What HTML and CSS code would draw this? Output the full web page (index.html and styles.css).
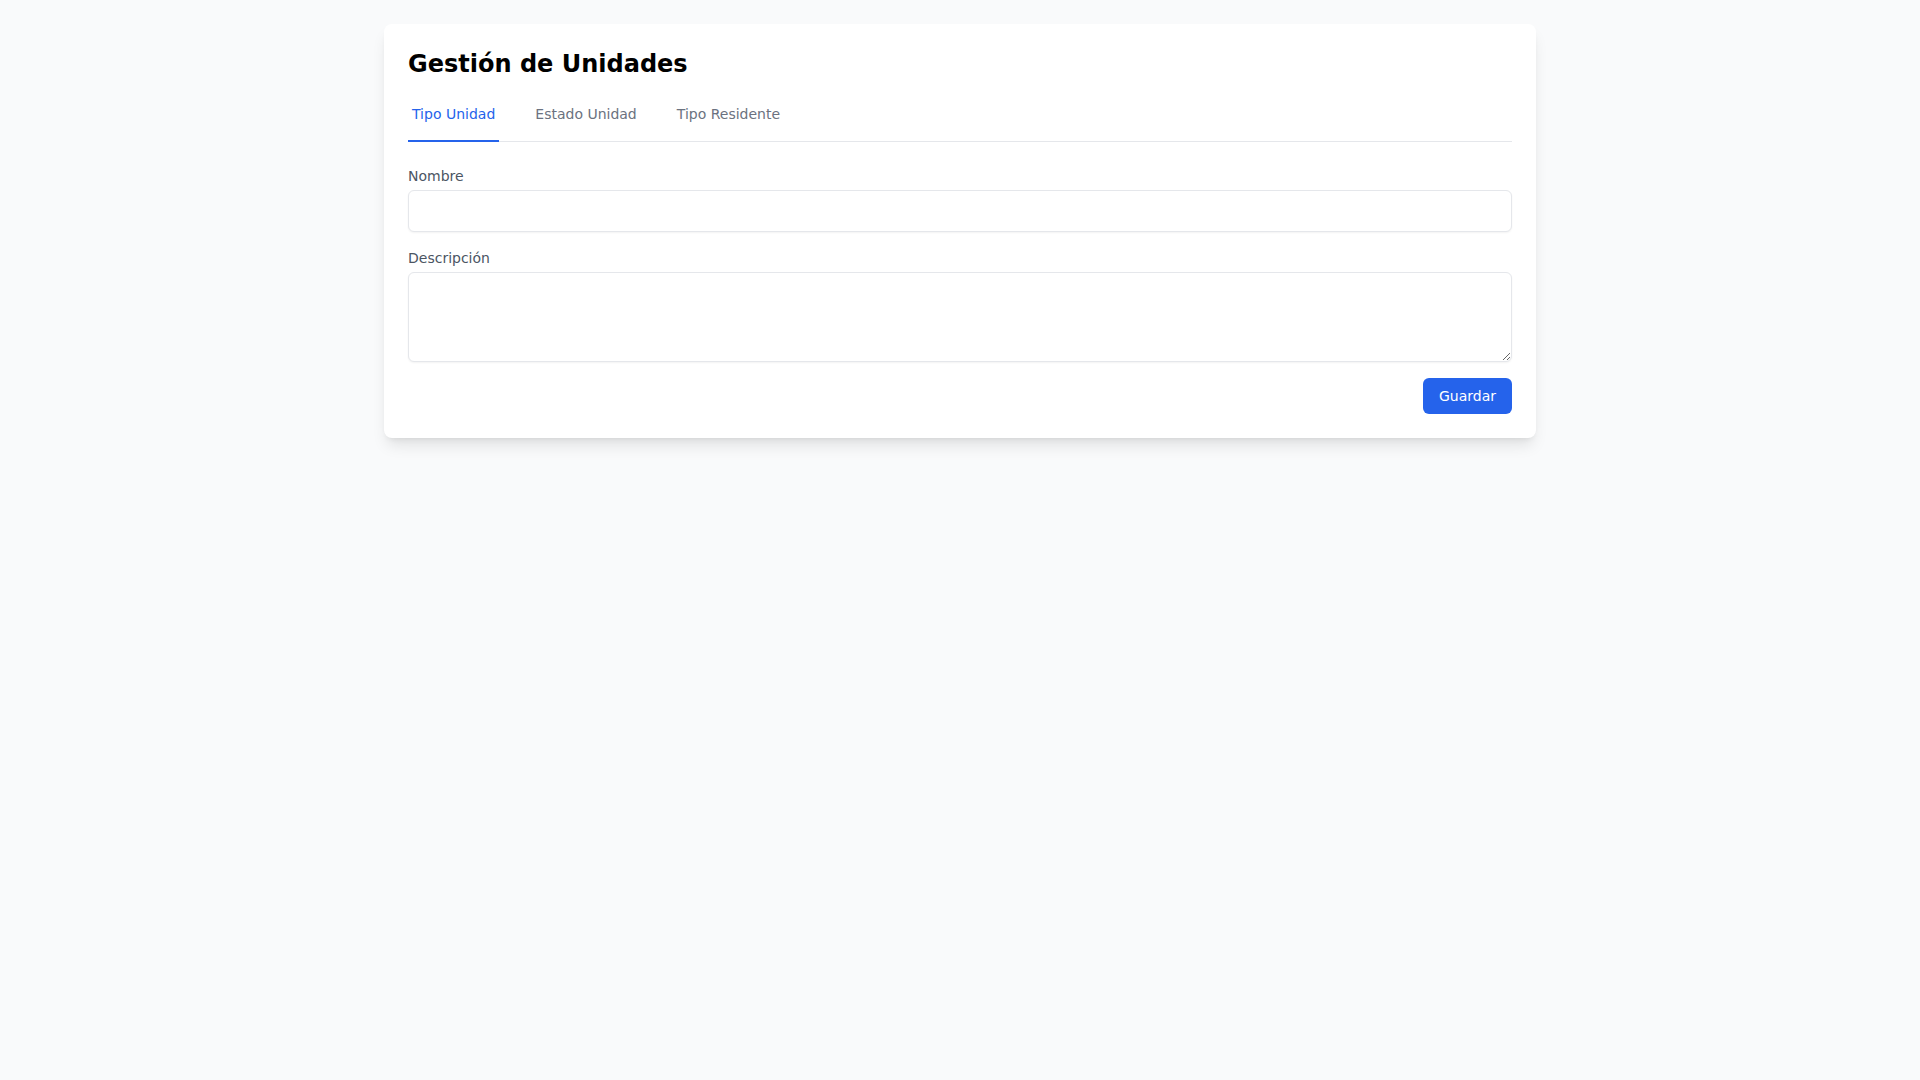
FILE: index.html
```html
<!DOCTYPE html>
<html lang="es">
<head>
    <meta charset="UTF-8">
    <meta name="viewport" content="width=device-width, initial-scale=1.0">
    <title>Gestión de Unidades</title>
    <link rel="stylesheet" href="styles.css">
</head>
<body>
    <div class="container">
        <h1>Gestión de Unidades</h1>

        <nav class="tabs">
            <a href="#" class="tab active">Tipo Unidad</a>
            <a href="#" class="tab">Estado Unidad</a>
            <a href="#" class="tab">Tipo Residente</a>
        </nav>

        <form class="unit-form" onsubmit="return false;">
            <div class="field">
                <label for="nombre">Nombre</label>
                <input type="text" id="nombre">
            </div>
            <div class="field">
                <label for="descripcion">Descripción</label>
                <textarea id="descripcion" rows="3"></textarea>
            </div>
            <div class="actions">
                <button type="submit" class="save-button">Guardar</button>
            </div>
        </form>
    </div>
</body>
</html>
```

FILE: styles.css
```css
* {
    box-sizing: border-box;
}
body {
    font-family: "DejaVu Sans", Verdana, sans-serif;
    margin: 0;
    padding: 24px 0;
    background: #f9fafb;
}
.container {
    max-width: 1152px;
    margin: 0 auto;
    padding: 24px;
    background: white;
    border-radius: 8px;
    box-shadow: 0 10px 15px -3px rgba(0,0,0,0.1), 0 4px 6px -4px rgba(0,0,0,0.1);
}
h1 {
    margin: 0 0 8px;
    font-size: 24px;
    line-height: 32px;
    font-weight: bold;
    color: #000;
}
.tabs {
    display: flex;
    gap: 32px;
    border-bottom: 1px solid #e5e7eb;
}
.tab {
    padding: 16px 4px;
    margin-bottom: -1px;
    font-size: 14px;
    line-height: 20px;
    color: #6b7280;
    text-decoration: none;
    border-bottom: 2px solid transparent;
}
.tab.active {
    color: #2563eb;
    border-bottom-color: #2563eb;
}
.unit-form {
    margin-top: 24px;
}
.field {
    margin-bottom: 16px;
}
.field label {
    display: block;
    margin-bottom: 4px;
    font-size: 14px;
    line-height: 20px;
    color: #4b5563;
}
.field input,
.field textarea {
    display: block;
    width: 100%;
    padding: 8px;
    font-family: inherit;
    font-size: 16px;
    line-height: 24px;
    border: 1px solid #e5e7eb;
    border-radius: 6px;
    background: white;
    box-shadow: 0 1px 2px rgba(0,0,0,0.05);
}
.field textarea {
    resize: vertical;
}
.actions {
    display: flex;
    justify-content: flex-end;
}
.save-button {
    padding: 8px 16px;
    font-family: inherit;
    font-size: 14px;
    line-height: 20px;
    color: white;
    background: #2563eb;
    border: none;
    border-radius: 6px;
    cursor: pointer;
}
.save-button:hover {
    background: #1d4ed8;
}
```
